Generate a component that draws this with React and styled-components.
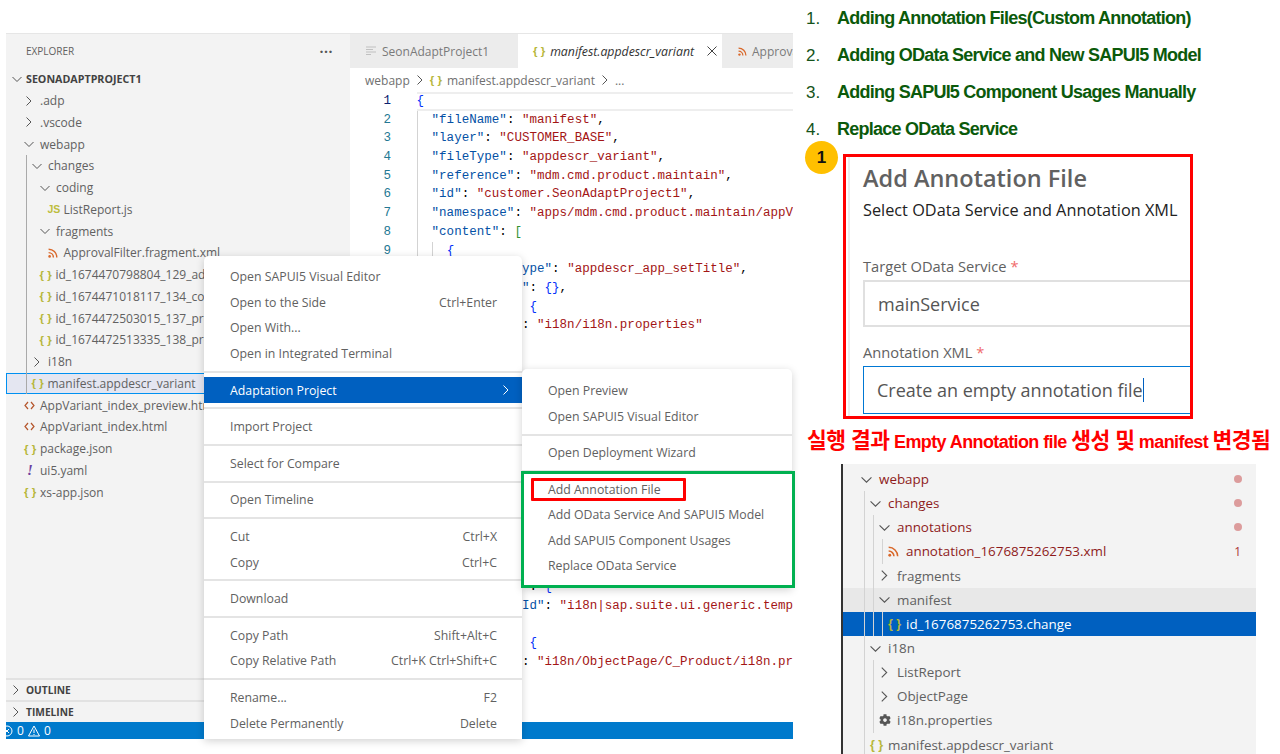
import React from "react";
import styled, { createGlobalStyle } from "styled-components";
import { FaCog } from "react-icons/fa";

const GlobalStyle = createGlobalStyle`
  html, body {
    margin: 0;
    padding: 0;
    background: #fff;
    overflow: hidden;
  }
  * { box-sizing: border-box; }
`;

const UI_FONT = `"Open Sans", "Noto Sans", sans-serif`;

const Page = styled.div`
  width: 1280px;
  height: 754px;
  display: flex;
  overflow: hidden;
  font-family: ${UI_FONT};
`;

/* ---------- left: vscode window ---------- */

const Window = styled.div`
  position: relative;
  flex: none;
  width: 787px;
  height: 706px;
  margin: 33px 0 0 6px;
  display: flex;
  flex-direction: column;
  border-top: 1px solid #e6e6e6;
`;

const Body = styled.div`
  flex: 1;
  min-height: 0;
  display: flex;
`;

const Sidebar = styled.div`
  flex: none;
  width: 344px;
  background: #f3f3f3;
  display: flex;
  flex-direction: column;
`;

const SidebarHead = styled.div`
  height: 34px;
  padding: 0 17px 0 20px;
  display: flex;
  align-items: center;
  justify-content: space-between;
  font-size: 10px;
  color: #616161;
`;

const Dots = styled.span`
  font-size: 14px;
  font-weight: 700;
  letter-spacing: 0.5px;
  line-height: 10px;
  margin-bottom: 6px;
  color: #555;
`;

const Row = styled.div`
  position: relative;
  flex: none;
  display: flex;
  align-items: center;
  white-space: nowrap;
  padding-left: ${(p) => p.$pad}px;
`;

const ExplorerRow = styled(Row)`
  height: 21.75px;
  font-size: 12px;
  color: #616161;
  ${(p) => p.$selected && `
    background: #e4e6f1;
    outline: 1px solid #0090f1;
    outline-offset: -1px;
  `}
`;

const Slot = styled.span`
  flex: none;
  width: ${(p) => p.$w}px;
  display: flex;
  align-items: center;
`;

const Guide = styled.span`
  position: absolute;
  top: 0;
  bottom: 0;
  left: ${(p) => p.$x}px;
  width: 1px;
  background: ${(p) => p.$color};
`;

const RootTitle = styled.span`
  font-size: 10.7px;
  font-weight: 700;
  color: #424242;
`;

const Spacer = styled.div`
  flex: 1;
`;

const Pane = styled.div`
  flex: none;
  height: 22px;
  border-top: 2px solid #e2e2e2;
  padding-left: 5px;
  display: flex;
  align-items: center;
  gap: 5px;
  font-size: 10.2px;
  font-weight: 700;
  color: #424242;
`;

const Editor = styled.div`
  flex: 1;
  min-width: 0;
  display: flex;
  flex-direction: column;
  overflow: hidden;
`;

const TabBar = styled.div`
  flex: none;
  height: 34px;
  display: flex;
  background: #ececec;
  overflow: hidden;
`;

const Tab = styled.div`
  flex: none;
  width: ${(p) => p.$w}px;
  padding-left: ${(p) => p.$pad}px;
  display: flex;
  align-items: center;
  gap: 5px;
  font-size: 12px;
  white-space: nowrap;
  color: #7a7a7a;
  svg { flex: none; }
  ${(p) => p.$active && `
    background: #fff;
    color: #333;
    font-style: italic;
    font-size: 12.3px;
  `}
`;

const CloseX = styled.span`
  margin-left: 8px;
  display: flex;
`;

const Crumbs = styled.div`
  flex: none;
  height: 24px;
  padding-left: 15px;
  display: flex;
  align-items: center;
  gap: 5px;
  font-size: 12px;
  color: #707070;
  white-space: nowrap;
`;

const CurlyGlyph = styled.span`
  font-family: "Liberation Sans", sans-serif;
  font-style: normal;
  font-weight: 700;
  font-size: ${(p) => p.$size || 11.5}px;
  color: #b7b73b;
  white-space: pre;
`;

const CodeRow = styled.div`
  flex: none;
  height: 18.7px;
  display: flex;
  font-family: "Liberation Mono", monospace;
  font-size: 12.5px;
  letter-spacing: 0.03px;
  line-height: 18.7px;
  white-space: pre;
`;

const LineNo = styled.span`
  flex: none;
  width: 41px;
  text-align: right;
  color: ${(p) => (p.$active ? "#0b216f" : "#237893")};
`;

const CodeText = styled.span`
  flex: 1;
  margin-left: 25.5px;
  color: #000;
  ${(p) => p.$active && `box-shadow: inset 0 2px 0 #eee, inset 0 -2px 0 #eee;`}
  ${(p) => !p.$active && `background: linear-gradient(#d3d3d3, #d3d3d3) 0 0 / 1px 100% no-repeat;`}
  ${(p) => p.$nested && `
    background:
      linear-gradient(#d3d3d3, #d3d3d3) 0 0 / 1px 100% no-repeat,
      linear-gradient(#d3d3d3, #d3d3d3) 15px 0 / 1px 100% no-repeat;
  `}
`;

const Key = styled.span`color: #0451a5;`;
const Str = styled.span`color: #a31515;`;
const Brace = styled.span`color: ${(p) => p.$color};`;

const StatusBar = styled.div`
  flex: none;
  height: 17px;
  background: #007acc;
  color: #fff;
  font-size: 12px;
  display: flex;
  align-items: center;
  gap: 4px;
  overflow: hidden;
`;

const StatusErr = styled.svg`
  margin-left: -5px;
  flex: none;
`;

/* ---------- context menus ---------- */

const Menu = styled.div`
  position: absolute;
  left: 198px;
  top: 222px;
  bottom: 0;
  width: 318px;
  padding-top: 8px;
  background: #fff;
  box-shadow: 0 2px 8px rgba(0, 0, 0, 0.18);
  border-radius: 5px 5px 0 0;
  font-size: 12.3px;
  color: #616161;
`;

const SubMenu = styled.div`
  position: absolute;
  left: 318px;
  top: 113px;
  width: 270px;
  padding-top: 9px;
  background: #fff;
  box-shadow: 0 2px 8px rgba(0, 0, 0, 0.18);
  border-radius: 5px 5px 0 0;
`;

const MenuItem = styled.div`
  height: 25.6px;
  padding: 0 25px 0 26px;
  display: flex;
  align-items: center;
  justify-content: space-between;
  white-space: nowrap;
  ${(p) => p.$active && `background: #0060c0; color: #fff; padding-right: 11px;`}
`;

const MenuSep = styled.div`
  height: 11px;
  display: flex;
  align-items: center;
  &::after {
    content: "";
    flex: 1;
    height: 2px;
    background: #e4e4e4;
  }
`;

const GreenGroup = styled.div`
  position: relative;
  margin: -6px -3px 0 -1px;
  height: 117px;
  padding-top: 4px;
  border: 3px solid #00b050;
  background: #fff;
`;

const RedItem = styled(MenuItem)`
  margin-left: 7px;
  padding-left: 14px;
  width: 155px;
  height: 23px;
  margin-bottom: 1px;
  border: 3px solid #ff0000;
  border-radius: 1px;
`;

const SubItem = styled(MenuItem)`
  padding-left: 26px;
`;

const GroupItem = styled(MenuItem)`
  padding-left: 24px;
`;

/* ---------- right column ---------- */

const Right = styled.div`
  flex: none;
  width: 487px;
  display: flex;
  flex-direction: column;
`;

const Steps = styled.ol`
  list-style: none;
  margin: 0;
  padding: 0 0 0 13px;
`;

const Step = styled.li`
  height: 37px;
  display: flex;
  align-items: center;
  font-family: "Liberation Sans", Arial, sans-serif;
  white-space: nowrap;
`;

const StepNo = styled.span`
  flex: none;
  width: 31px;
  font-size: 17px;
  color: #14531a;
`;

const StepText = styled.span`
  font-size: 18px;
  font-weight: 700;
  letter-spacing: -0.76px;
  color: #0b5a0b;
`;

const Card = styled.div`
  position: relative;
  flex: none;
  width: 350px;
  height: 265px;
  margin: 6px 0 0 50px;
  border: 3px solid #f00;
`;

const Badge = styled.div`
  position: absolute;
  left: -41px;
  top: -16px;
  width: 33px;
  height: 33px;
  border-radius: 50%;
  background: #ffc000;
  color: #111;
  display: flex;
  align-items: center;
  justify-content: center;
  font-family: "Liberation Sans", sans-serif;
  font-weight: 700;
  font-size: 17px;
`;

const CardInner = styled.div`
  height: 100%;
  margin-left: 2px;
  border-left: 2px solid #ececec;
  padding: 5px 0 0 13px;
  overflow: hidden;
`;

const CardTitle = styled.div`
  font-size: 23.5px;
  font-weight: 600;
  line-height: 32px;
  color: #616161;
  white-space: nowrap;
`;

const CardSub = styled.div`
  margin-top: 1px;
  font-size: 16.3px;
  line-height: 30px;
  color: #222;
  white-space: nowrap;
`;

const FieldLabel = styled.div`
  margin-top: ${(p) => p.$top}px;
  margin-bottom: 3px;
  font-size: 14.7px;
  line-height: 22px;
  color: #616161;
  white-space: nowrap;
`;

const Star = styled.span`color: #f06a6a;`;

const Field = styled.div`
  width: 400px;
  height: ${(p) => p.$h}px;
  padding-left: 13px;
  display: flex;
  align-items: center;
  font-size: 18px;
  color: #555;
  white-space: nowrap;
  border: ${(p) => (p.$focus ? "1.5px solid #0078d4" : "2px solid #e0e0e0")};
`;

const Caret = styled.span`
  width: 1.5px;
  height: 24px;
  background: #0060c0;
`;

const ResultNote = styled.div`
  margin: 10px 0 0 14px;
  height: 24px;
  line-height: 24px;
  font-family: "Liberation Sans", "Noto Sans CJK KR", sans-serif;
  font-size: 18px;
  font-weight: 700;
  letter-spacing: -0.6px;
  color: #f00;
  white-space: nowrap;
`;

const Hangul = styled.span`
  font-size: 21.5px;
  letter-spacing: -0.5px;
`;

const Snippet = styled.div`
  flex: 1;
  min-height: 0;
  width: 415px;
  margin: 11px 0 0 48px;
  padding-top: 3px;
  background: #f3f3f3;
  border-left: 2px solid #333;
  overflow: hidden;
`;

const SnippetRow = styled(Row)`
  height: 24.15px;
  font-size: 13.4px;
  color: ${(p) => (p.$red ? "#8e1b1b" : "#616161")};
  ${(p) => p.$hover && `background: #e8e8e8;`}
  ${(p) => p.$selected && `background: #0060c0; color: #fff;`}
`;

const Dot = styled.span`
  position: absolute;
  right: 14px;
  width: 8px;
  height: 8px;
  border-radius: 50%;
  background: #dc9c9c;
`;

const Count = styled.span`
  position: absolute;
  right: 15px;
  font-size: 12px;
  color: #a33;
`;

const Bang = styled.span`
  font-family: "Liberation Serif", serif;
  font-style: italic;
  font-weight: 700;
  font-size: 15px;
  color: #6c3fa0;
  margin-left: 3px;
`;

const JsGlyph = styled.span`
  font-family: "Liberation Sans", sans-serif;
  font-weight: 700;
  font-size: 10.5px;
  color: #bdbd3d;
`;

/* ---------- small drawings ---------- */

const Chevron = ({ open, size = 10, color = "#555" }) => (
  <svg width={size} height={size} viewBox="0 0 10 10" fill="none" stroke={color} strokeWidth="1">
    {open ? <path d="M0.5 3 L5 7.5 L9.5 3" /> : <path d="M2.5 0.5 L7 5 L2.5 9.5" />}
  </svg>
);

const Rss = ({ size = 10 }) => (
  <svg width={size} height={size} viewBox="0 0 10 10" fill="none" stroke="#d9682a" strokeWidth="1.4">
    <circle cx="1.6" cy="8.4" r="1.3" fill="#d9682a" stroke="none" />
    <path d="M0.6 4.6 A4.8 4.8 0 0 1 5.4 9.4" />
    <path d="M0.6 1.2 A8.2 8.2 0 0 1 8.8 9.4" />
  </svg>
);

const Angle = () => (
  <svg width="11" height="9" viewBox="0 0 11 9" fill="none" stroke="#b5562c" strokeWidth="1.2">
    <path d="M4 1 L1 4.5 L4 8" />
    <path d="M7 1 L10 4.5 L7 8" />
  </svg>
);

const ICONS = {
  open: () => <Chevron open />,
  closed: () => <Chevron />,
  curly: () => <CurlyGlyph>{"{ }"}</CurlyGlyph>,
  js: () => <JsGlyph>JS</JsGlyph>,
  rss: () => <Rss />,
  angle: () => <Angle />,
  bang: () => <Bang>!</Bang>,
};

const TREE = [
  { pad: 18, icon: "closed", label: ".adp" },
  { pad: 18, icon: "closed", label: ".vscode" },
  { pad: 18, icon: "open", label: "webapp" },
  { pad: 26, icon: "open", label: "changes", guide: true },
  { pad: 34, icon: "open", label: "coding", guide: true },
  { pad: 41.5, icon: "js", label: "ListReport.js", guide: true },
  { pad: 34, icon: "open", label: "fragments", guide: true },
  { pad: 41.5, icon: "rss", label: "ApprovalFilter.fragment.xml", guide: true },
  { pad: 33.5, icon: "curly", label: "id_1674470798804_129_addNewModel.change", guide: true },
  { pad: 33.5, icon: "curly", label: "id_1674471018117_134_codeExt.change", guide: true },
  { pad: 33.5, icon: "curly", label: "id_1674472503015_137_propertyChange.change", guide: true },
  { pad: 33.5, icon: "curly", label: "id_1674472513335_138_propertyChange.change", guide: true },
  { pad: 26, icon: "closed", label: "i18n", guide: true },
  { pad: 25.5, icon: "curly", label: "manifest.appdescr_variant", guide: true, selected: true },
  { pad: 18, icon: "angle", label: "AppVariant_index_preview.html" },
  { pad: 18, icon: "angle", label: "AppVariant_index.html" },
  { pad: 18, icon: "curly", label: "package.json" },
  { pad: 18, icon: "bang", label: "ui5.yaml" },
  { pad: 18, icon: "curly", label: "xs-app.json" },
];

const CODE = [
  `{`,
  `  "fileName": "manifest",`,
  `  "layer": "CUSTOMER_BASE",`,
  `  "fileType": "appdescr_variant",`,
  `  "reference": "mdm.cmd.product.maintain",`,
  `  "id": "customer.SeonAdaptProject1",`,
  `  "namespace": "apps/mdm.cmd.product.maintain/appVariants/customer.SeonAdaptProject1/",`,
  `  "content": [`,
  `    {`,
  `      "changeType": "appdescr_app_setTitle",`,
  `      "content": {},`,
  `      "texts": {`,
  `        "i18n": "i18n/i18n.properties"`,
  `      }`,
  `    },`,
  `    {`,
  `      "changeType": "appdescr_ui5_addNewModel",`,
  `      "content": {`,
  `        "model": {`,
  `          "i18n": {`,
  `            "type": "sap.ui.model",`,
  `            "uri": "i18n",`,
  `            "x": 1`,
  `          }`,
  `        }`,
  `      },`,
  `        "model": {`,
  `        "modelId": "i18n|sap.suite.ui.generic.template.ListReport|C_Product",`,
  `      },`,
  `      "texts": {`,
  `        "i18n": "i18n/ObjectPage/C_Product/i18n.properties"`,
];

const tokenize = (line) =>
  line.split(/("[^"]*"(?=:)|"[^"]*"|[{}[\]])/).map((part, i) => {
    if (!part) return null;
    if (part.startsWith('"')) {
      return line.slice(line.indexOf(part) + part.length).startsWith(":") ? (
        <Key key={i}>{part}</Key>
      ) : (
        <Str key={i}>{part}</Str>
      );
    }
    if (part === "[" || part === "]") return <Brace key={i} $color="#319331">{part}</Brace>;
    if (part === "{" || part === "}") return <Brace key={i} $color="#0431fa">{part}</Brace>;
    return part;
  });

const SNIPPET = [
  { pad: 18, icon: "open", label: "webapp", red: true, dot: true },
  { pad: 27, icon: "open", label: "changes", red: true, dot: true, guides: [21] },
  { pad: 36, icon: "open", label: "annotations", red: true, dot: true, guides: [21, 30] },
  { pad: 45, icon: "rss", label: "annotation_1676875262753.xml", red: true, count: 1, guides: [21, 30, 39] },
  { pad: 36, icon: "closed", label: "fragments", guides: [21, 30] },
  { pad: 36, icon: "open", label: "manifest", hover: true, guides: [21, 30] },
  { pad: 45, icon: "curly", label: "id_1676875262753.change", selected: true, guides: [21, 30, 39] },
  { pad: 27, icon: "open", label: "i18n", guides: [21] },
  { pad: 36, icon: "closed", label: "ListReport", guides: [21, 30] },
  { pad: 36, icon: "closed", label: "ObjectPage", guides: [21, 30] },
  { pad: 36, icon: "gear", label: "i18n.properties", guides: [21, 30] },
  { pad: 27, icon: "curly", label: "manifest.appdescr_variant", guides: [21] },
];

const SNIPPET_ICONS = {
  ...ICONS,
  open: () => <Chevron open size={11} />,
  closed: () => <Chevron size={11} />,
  rss: () => <Rss size={11} />,
  curly: () => <CurlyGlyph $size={12.5}>{"{ }"}</CurlyGlyph>,
  gear: () => <FaCog size={12} color="#555" />,
};

const MAIN_MENU = [
  [["Open SAPUI5 Visual Editor"], ["Open to the Side", "Ctrl+Enter"], ["Open With..."], ["Open in Integrated Terminal"]],
  [["Adaptation Project", "chevron"]],
  [["Import Project"]],
  [["Select for Compare"]],
  [["Open Timeline"]],
  [["Cut", "Ctrl+X"], ["Copy", "Ctrl+C"]],
  [["Download"]],
  [["Copy Path", "Shift+Alt+C"], ["Copy Relative Path", "Ctrl+K Ctrl+Shift+C"]],
  [["Rename...", "F2"], ["Delete Permanently", "Delete"]],
];

function ContextMenu() {
  return (
    <Menu>
      {MAIN_MENU.map((group, g) => (
        <React.Fragment key={g}>
          {g > 0 && <MenuSep />}
          {group.map(([label, hint]) => (
            <MenuItem key={label} $active={hint === "chevron"}>
              <span>{label}</span>
              {hint === "chevron" ? <Chevron color="#fff" /> : hint && <span>{hint}</span>}
            </MenuItem>
          ))}
        </React.Fragment>
      ))}
      <SubMenu>
        <SubItem>Open Preview</SubItem>
        <SubItem>Open SAPUI5 Visual Editor</SubItem>
        <MenuSep />
        <SubItem>Open Deployment Wizard</SubItem>
        <MenuSep />
        <GreenGroup>
          <RedItem>Add Annotation File</RedItem>
          <GroupItem>Add OData Service And SAPUI5 Model</GroupItem>
          <GroupItem>Add SAPUI5 Component Usages</GroupItem>
          <GroupItem>Replace OData Service</GroupItem>
        </GreenGroup>
      </SubMenu>
    </Menu>
  );
}

function VsCodeWindow() {
  return (
    <Window>
      <Body>
        <Sidebar>
          <SidebarHead>
            <span>EXPLORER</span>
            <Dots>...</Dots>
          </SidebarHead>
          <ExplorerRow $pad={6}>
            <Slot $w={14}><Chevron open /></Slot>
            <RootTitle>SEONADAPTPROJECT1</RootTitle>
          </ExplorerRow>
          {TREE.map((row) => {
            const Icon = ICONS[row.icon];
            return (
              <ExplorerRow key={row.label} $pad={row.pad} $selected={row.selected}>
                {row.guide && <Guide $x={20} $color="#a9a9a9" />}
                <Slot $w={16}><Icon /></Slot>
                {row.label}
              </ExplorerRow>
            );
          })}
          <Spacer />
          <Pane><Chevron />OUTLINE</Pane>
          <Pane><Chevron />TIMELINE</Pane>
        </Sidebar>
        <Editor>
          <TabBar>
            <Tab $w={168} $pad={16}>
              <svg width="11" height="10" viewBox="0 0 11 10" stroke="#c0c0c0" strokeWidth="1">
                <path d="M0 1h10M0 3.5h7M0 6h10M0 8.5h5" />
              </svg>
              {"SeonAdaptProject1"}
            </Tab>
            <Tab $w={204} $pad={15} $active>
              <CurlyGlyph>{"{ }"}</CurlyGlyph>
              {"manifest.appdescr_variant"}
              <CloseX>
                <svg width="10" height="10" viewBox="0 0 10 10" stroke="#444" strokeWidth="1">
                  <path d="M0.5 0.5 L9.5 9.5 M9.5 0.5 L0.5 9.5" />
                </svg>
              </CloseX>
            </Tab>
            <Tab $w={120} $pad={16}>
              <Rss size={9} />
              {"ApprovalFilter.fragment.xml"}
            </Tab>
          </TabBar>
          <Crumbs>
            webapp
            <Chevron />
            <CurlyGlyph>{"{ }"}</CurlyGlyph>
            manifest.appdescr_variant
            <Chevron />
            ...
          </Crumbs>
          {CODE.map((line, i) => (
            <CodeRow key={i}>
              <LineNo $active={i === 0}>{i + 1}</LineNo>
              <CodeText $active={i === 0} $nested={i >= 8}>{tokenize(line)}</CodeText>
            </CodeRow>
          ))}
        </Editor>
      </Body>
      <StatusBar>
        <StatusErr width="12" height="12" viewBox="0 0 12 12" fill="none" stroke="#fff" strokeWidth="1">
          <circle cx="6" cy="6" r="5" />
          <path d="M4 4 L8 8 M8 4 L4 8" />
        </StatusErr>
        0
        <svg width="12" height="12" viewBox="0 0 12 12" fill="none" stroke="#fff" strokeWidth="1">
          <path d="M6 1 L11.5 11 H0.5 Z" />
          <path d="M6 4.5 V8 M6 9 V10" />
        </svg>
        0
      </StatusBar>
      <ContextMenu />
    </Window>
  );
}

function RightColumn() {
  return (
    <Right>
      <Steps>
        {[
          "Adding Annotation Files(Custom Annotation)",
          "Adding OData Service and New SAPUI5 Model",
          "Adding SAPUI5 Component Usages Manually",
          "Replace OData Service",
        ].map((text, i) => (
          <Step key={text}>
            <StepNo>{i + 1}.</StepNo>
            <StepText>{text}</StepText>
          </Step>
        ))}
      </Steps>
      <Card>
        <Badge>1</Badge>
        <CardInner>
          <CardTitle>Add Annotation File</CardTitle>
          <CardSub>Select OData Service and Annotation XML</CardSub>
          <FieldLabel $top={30}>Target OData Service <Star>*</Star></FieldLabel>
          <Field $h={47}>mainService</Field>
          <FieldLabel $top={14}>Annotation XML <Star>*</Star></FieldLabel>
          <Field $h={48} $focus>Create an empty annotation file<Caret /></Field>
        </CardInner>
      </Card>
      <ResultNote>
        <Hangul>실행 결과</Hangul> Empty Annotation file <Hangul>생성 및</Hangul> manifest <Hangul>변경됨</Hangul>
      </ResultNote>
      <Snippet>
        {SNIPPET.map((row) => {
          const Icon = SNIPPET_ICONS[row.icon];
          return (
            <SnippetRow
              key={row.label}
              $pad={row.pad}
              $red={row.red}
              $hover={row.hover}
              $selected={row.selected}
            >
              {(row.guides || []).map((x) => <Guide key={x} $x={x} $color="#d3d3d3" />)}
              <Slot $w={18}><Icon /></Slot>
              {row.label}
              {row.dot && <Dot />}
              {row.count && <Count>{row.count}</Count>}
            </SnippetRow>
          );
        })}
      </Snippet>
    </Right>
  );
}

export default function App() {
  return (
    <>
      <GlobalStyle />
      <Page>
        <VsCodeWindow />
        <RightColumn />
      </Page>
    </>
  );
}
